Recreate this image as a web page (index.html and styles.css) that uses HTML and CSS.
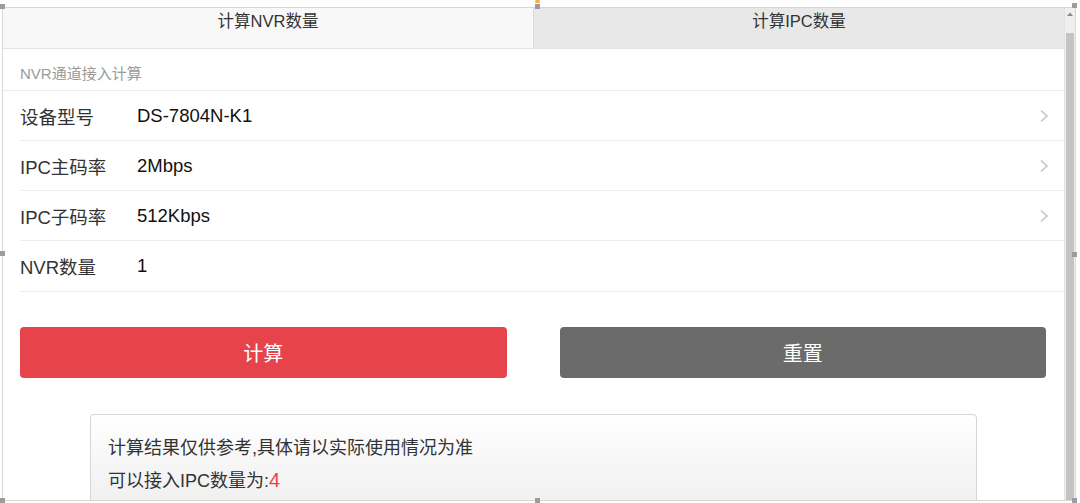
FILE: index.html
```html
<!DOCTYPE html>
<html lang="zh">
<head>
<meta charset="utf-8">
<title>NVR计算</title>
<link rel="stylesheet" href="styles.css">
</head>
<body>
<div class="canvas">
  <div class="frame">
    <div class="app">
      <div class="tabs">
        <div class="tab tab-active">计算NVR数量</div>
        <div class="tab tab-other">计算IPC数量</div>
      </div>
      <div class="section-title">NVR通道接入计算</div>
      <div class="list">
        <div class="row">
          <span class="label">设备型号</span>
          <span class="value">DS-7804N-K1</span>
          <svg class="chev" width="10" height="14" viewBox="0 0 10 14"><path d="M2 1.5 L8 7 L2 12.5" fill="none" stroke="#c4c4c4" stroke-width="1.6"/></svg>
        </div>
        <div class="row">
          <span class="label">IPC主码率</span>
          <span class="value">2Mbps</span>
          <svg class="chev" width="10" height="14" viewBox="0 0 10 14"><path d="M2 1.5 L8 7 L2 12.5" fill="none" stroke="#c4c4c4" stroke-width="1.6"/></svg>
        </div>
        <div class="row">
          <span class="label">IPC子码率</span>
          <span class="value">512Kbps</span>
          <svg class="chev" width="10" height="14" viewBox="0 0 10 14"><path d="M2 1.5 L8 7 L2 12.5" fill="none" stroke="#c4c4c4" stroke-width="1.6"/></svg>
        </div>
        <div class="row row-last">
          <span class="label">NVR数量</span>
          <span class="value">1</span>
        </div>
      </div>
      <div class="buttons">
        <button class="btn btn-red">计算</button>
        <button class="btn btn-gray">重置</button>
      </div>
      <div class="result">
        <p class="result-line">计算结果仅供参考,具体请以实际使用情况为准</p>
        <p class="result-line">可以接入IPC数量为:<span class="num">4</span></p>
      </div>
    </div>
    <div class="scrollbar">
      <svg class="sb-arrow" width="8" height="6" viewBox="0 0 8 6"><path d="M1 5 L4 1.5 L7 5 Z" fill="#8a8a8a"/></svg>
      <div class="sb-thumb"></div>
    </div>
  </div>
  <span class="handle h-tl"></span>
  <span class="handle h-tm"></span>
  <span class="handle-dot"></span>
  <span class="handle h-tr"></span>
  <span class="handle h-ml"></span>
  <span class="handle h-mr"></span>
  <span class="handle h-bl"></span>
  <span class="handle h-bm"></span>
  <span class="handle h-br"></span>
</div>
</body>
</html>
```

FILE: styles.css
```css
* { box-sizing: border-box; }
html, body { margin: 0; padding: 0; background: #ffffff; overflow: hidden; }
body {
  font-family: "Liberation Sans", "Noto Sans CJK SC", sans-serif;
  color: #333;
}
.canvas {
  position: relative;
  width: 1080px;
  height: 503px;
  padding: 7px 0 0 2px;
}
.frame {
  width: 1074px;
  height: 494px;
  border: 1px solid #d8d8d8;
  display: flex;
  overflow: hidden;
}
.app {
  flex: 1;
  min-width: 0;
  display: flex;
  flex-direction: column;
}
.tabs {
  display: flex;
  height: 41px;
  border-bottom: 1px solid #e4e4e4;
  flex-shrink: 0;
}
.tab {
  flex: 1;
  text-align: center;
  font-size: 16.5px;
  line-height: 26px;
  color: #333;
}
.tab-active { background: #f8f8f8; }
.tab-other { background: #e8e8e8; border-left: 1px solid #dcdcdc; }
.section-title {
  height: 42px;
  padding: 15px 0 0 17px;
  font-size: 15px;
  line-height: 20px;
  color: #9a9a9a;
  border-bottom: 1px solid #ececec;
  flex-shrink: 0;
}
.list { padding-left: 17px; flex-shrink: 0; }
.row {
  height: 50px;
  display: flex;
  align-items: center;
  border-bottom: 1px solid #ececec;
  padding-right: 15px;
}
.row-last { height: 51px; }
.label {
  width: 117px;
  font-size: 18.5px;
  color: #333;
}
.value {
  flex: 1;
  font-size: 18.5px;
  color: #111;
}
.chev { flex-shrink: 0; }
.buttons {
  display: flex;
  gap: 53px;
  padding: 0 18px 0 17px;
  margin-top: 35px;
  flex-shrink: 0;
}
.btn {
  flex: 1;
  height: 51px;
  border: none;
  border-radius: 4px;
  color: #fff;
  font-family: "Liberation Sans", "Noto Sans CJK SC", sans-serif;
  font-size: 20px;
  padding: 0;
}
.btn-red { background: #e6434b; }
.btn-gray { background: #6b6b6b; }
.result {
  width: 887px;
  margin: 36px auto 0;
  padding: 17px 17px 20px;
  border: 1px solid #d6d6d6;
  border-radius: 4px;
  background: linear-gradient(#ffffff, #f1f1f1 80px);
  flex-shrink: 0;
  height: 140px;
}
.result-line {
  margin: 0;
  font-size: 18px;
  line-height: 32px;
  color: #333;
}
.num { color: #e6434b; font-size: 20px; }
.scrollbar {
  width: 11px;
  background: #efefef;
  border-left: 1px solid #e2e2e2;
  display: flex;
  flex-direction: column;
  align-items: center;
  flex-shrink: 0;
}
.sb-arrow { margin-top: 3px; }
.sb-thumb {
  margin-top: 16px;
  width: 8px;
  flex: 1;
  background: #c3c3c3;
}
.handle {
  position: absolute;
  width: 5px;
  height: 5px;
  background: #9c9c9c;
}
.h-tl { left: 0; top: 4px; }
.h-tm { left: 535px; top: 4px; }
.h-tr { left: 1072px; top: 3px; }
.h-ml { left: 0; top: 251px; }
.h-mr { left: 1072px; top: 252px; }
.h-bl { left: 0; top: 498px; }
.h-bm { left: 535px; top: 498px; }
.h-br { left: 1072px; top: 498px; }
.handle-dot {
  position: absolute;
  left: 535px;
  top: 0;
  width: 5px;
  height: 3px;
  background: #f0b040;
  border-radius: 2px;
}
```
